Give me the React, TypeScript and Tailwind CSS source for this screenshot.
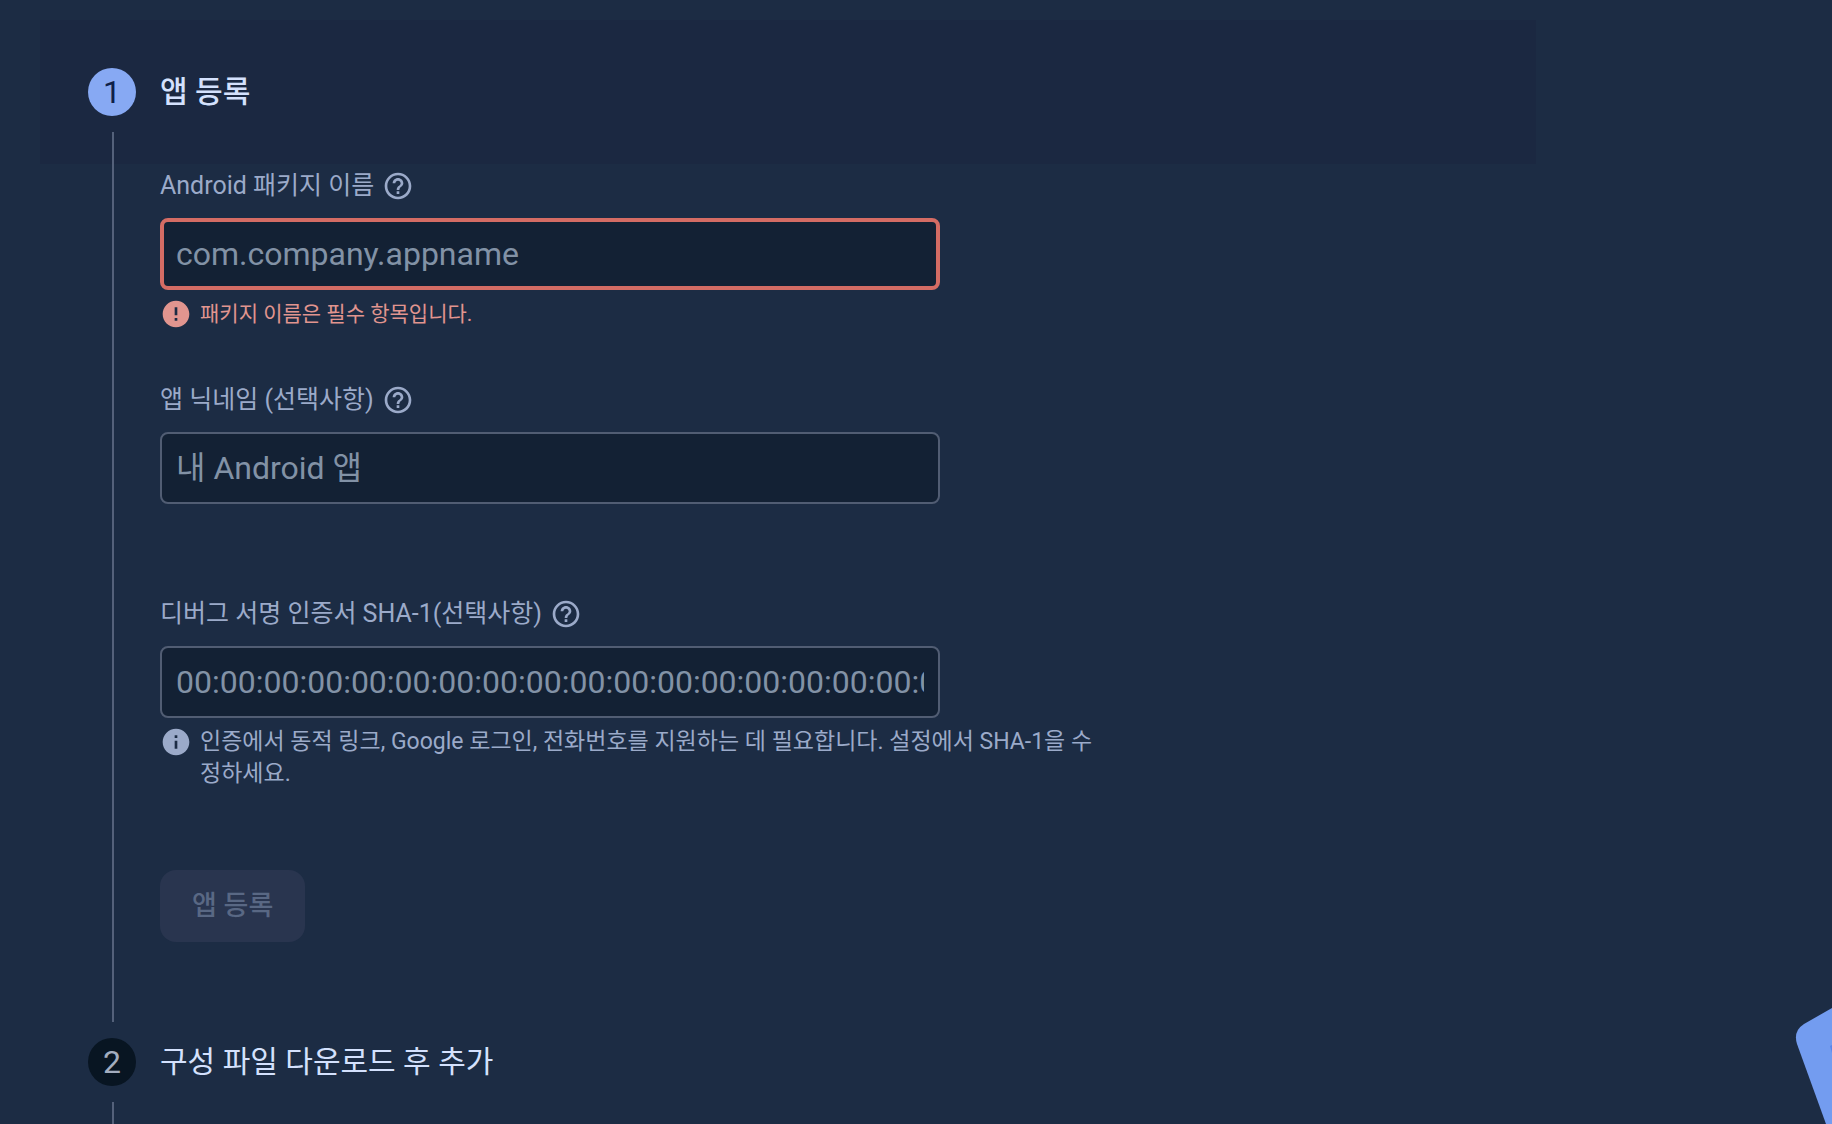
import { useId } from "react";
import type { ReactNode } from "react";
import clsx from "clsx";
import { MdError, MdHelpOutline, MdInfo } from "react-icons/md";

type HeaderProps = {
  step: number;
  title: string;
  active?: boolean;
  first?: boolean;
};

function StepHeader({ step, title, active, first }: HeaderProps) {
  return (
    <div className={clsx("flex h-36 items-center gap-6 px-12", active && "bg-[#1b2841]")}>
      <div className="flex w-12 flex-col gap-4">
        <span className={clsx("ml-6 h-8 w-0.5", !first && "bg-[#54617a]")} />
        <span
          className={clsx(
            "flex size-12 items-center justify-center rounded-full text-[32px] leading-none",
            active ? "bg-[#87a9f3] text-[#0f2048]" : "bg-[#081522] text-[#a3adbf]",
          )}
        >
          {step}
        </span>
        <span className="ml-6 h-8 w-0.5 bg-[#54617a]" />
      </div>
      <h2
        className={clsx(
          "text-[30px] leading-10 text-[#d4e1fd]",
          active ? "font-medium" : "font-normal",
        )}
      >
        {title}
      </h2>
    </div>
  );
}

type FieldProps = {
  label: string;
  placeholder: string;
  invalid?: boolean;
  hint?: ReactNode;
};

function Field({ label, placeholder, invalid, hint }: FieldProps) {
  const id = useId();
  const HintIcon = invalid ? MdError : MdInfo;

  return (
    <div>
      <div className="mb-4 flex items-center gap-2 text-[#9baac9]">
        <label htmlFor={id} className="text-[25px] leading-8">
          {label}
        </label>
        <button type="button" aria-label={`${label} 도움말`}>
          <MdHelpOutline className="size-8" />
        </button>
      </div>
      <input
        id={id}
        type="text"
        placeholder={placeholder}
        aria-invalid={invalid}
        aria-describedby={hint ? `${id}-hint` : undefined}
        className={clsx(
          "block h-18 w-full max-w-[780px] rounded-lg bg-[#132134] text-[32px] text-[#d4e1fd] outline-none placeholder:text-[#8292a6]",
          invalid ? "border-4 border-[#d46c64] px-3" : "border-2 border-[#515d73] px-3.5",
        )}
      />
      <div
        id={`${id}-hint`}
        className={clsx(
          "mt-2 flex min-h-8 max-w-[940px] items-start gap-2 leading-8",
          invalid ? "text-[21px] text-[#e1958f]" : "text-[23px] text-[#9baac9]",
        )}
      >
        {hint && (
          <>
            <HintIcon className="size-8 shrink-0" />
            <p>{hint}</p>
          </>
        )}
      </div>
    </div>
  );
}

function CornerArt() {
  return (
    <svg
      className="absolute right-0 bottom-0 h-[124px] w-10"
      viewBox="0 0 40 124"
      aria-hidden="true"
    >
      <path d="M40 8 L12 24 Q1 31 5 44 L34 124 H40 Z" fill="#739cf0" />
      <path d="M38 46 L40 45 V53 Z" fill="#5a85ea" />
    </svg>
  );
}

export default function App() {
  return (
    <main
      lang="ko"
      className="relative h-screen overflow-hidden bg-[#1c2c44] pt-5 pr-74 pl-10 font-[Roboto,'Noto_Sans_CJK_KR',sans-serif]"
    >
      <section>
        <StepHeader step={1} title="앱 등록" active first />
        <div className="flex gap-6 px-12">
          <div className="flex w-12">
            <span className="ml-6 w-0.5 bg-[#54617a]" />
          </div>
          <form className="flex-1 pt-1.5 pb-12" onSubmit={(e) => e.preventDefault()}>
            <div className="flex flex-col gap-[54px]">
              <Field
                label="Android 패키지 이름"
                placeholder="com.company.appname"
                invalid
                hint="패키지 이름은 필수 항목입니다."
              />
              <Field label="앱 닉네임 (선택사항)" placeholder="내 Android 앱" />
              <Field
                label="디버그 서명 인증서 SHA-1(선택사항)"
                placeholder="00:00:00:00:00:00:00:00:00:00:00:00:00:00:00:00:00:00:00:00"
                hint="인증에서 동적 링크, Google 로그인, 전화번호를 지원하는 데 필요합니다. 설정에서 SHA-1을 수정하세요."
              />
            </div>
            <button
              type="submit"
              disabled
              className="mt-20 block h-18 rounded-2xl bg-[#29354f] px-8 text-[27px] font-medium text-[#596884]"
            >
              앱 등록
            </button>
          </form>
        </div>
      </section>
      <section>
        <StepHeader step={2} title="구성 파일 다운로드 후 추가" />
      </section>
      <CornerArt />
    </main>
  );
}
